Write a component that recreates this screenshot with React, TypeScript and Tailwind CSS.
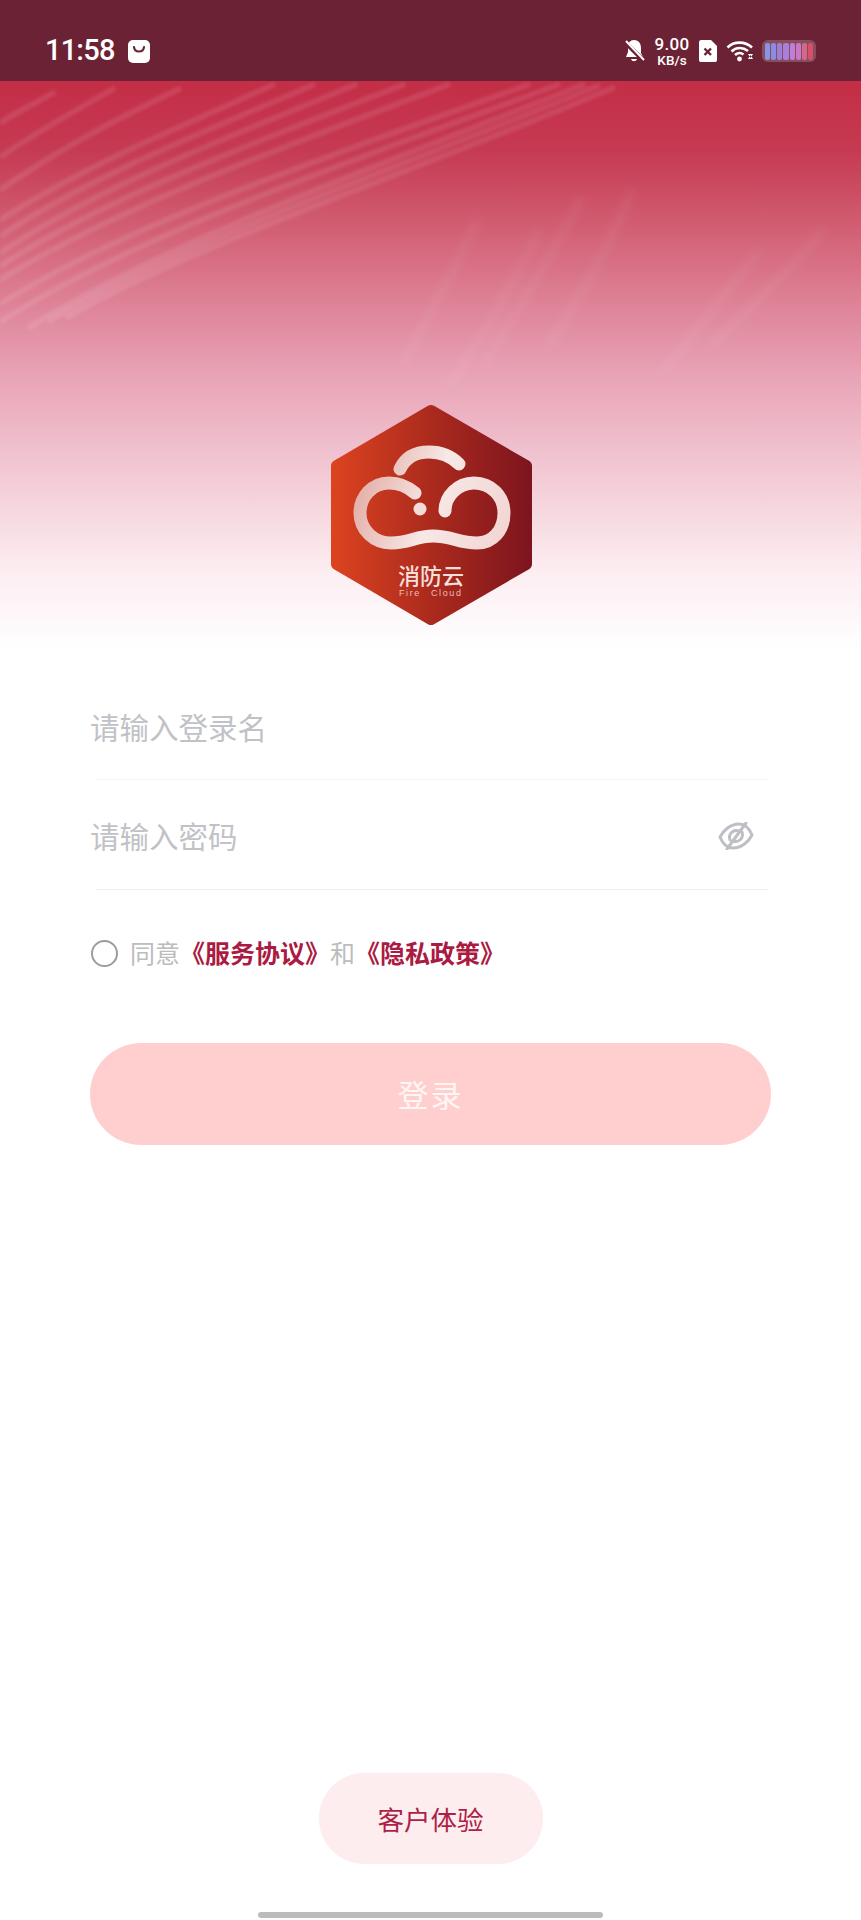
const cjk = "font-['Noto_Sans_CJK_SC','Noto_Sans',sans-serif]";

function Waves() {
  const main = [
    'M66 318 C190 245 420 170 615 87',
    'M48 322 C180 242 400 168 600 85',
    'M28 328 C170 240 380 165 585 84',
    'M0 322 C140 232 350 162 560 84',
    'M0 304 C130 222 330 156 530 84',
    'M0 280 C120 205 290 145 450 84',
    'M0 266 C110 195 262 140 405 84',
    'M0 253 C100 185 235 135 357 84',
    'M0 236 C92 175 210 130 315 84',
    'M0 220 C85 165 185 125 275 84',
    'M0 190 C65 145 125 115 181 88',
    'M0 157 C40 130 80 108 115 88',
    'M0 123 C20 110 38 102 55 92',
  ];
  const faint = [
    'M632 190 C610 250 575 300 549 347',
    'M582 197 C550 260 510 320 483 367',
    'M478 220 C450 280 420 330 401 367',
    'M540 230 C510 290 480 340 450 385',
    'M824 230 C780 280 740 320 708 347',
    'M760 250 C720 300 690 340 660 375',
  ];
  return (
    <>
      <svg className="absolute inset-0 blur-[1.5px]" width="861" height="650" viewBox="0 0 861 650" fill="none">
        {main.map((d, i) => (
          <path key={i} d={d} stroke="#fff" strokeOpacity="0.1" strokeWidth="6" />
        ))}
      </svg>
      <svg className="absolute inset-0 blur-[4px]" width="861" height="650" viewBox="0 0 861 650" fill="none">
        {faint.map((d, i) => (
          <path key={i} d={d} stroke="#fff" strokeOpacity="0.06" strokeWidth="9" />
        ))}
      </svg>
    </>
  );
}

function StatusIcons() {
  return (
    <div className="flex items-center">
      {/* muted bell */}
      <svg width="21" height="24" viewBox="0 0 21 24" fill="none">
        <path d="M10 1 C15 1 17 5 17 9 L17 14 L19 18 L2 18 L4 13 L4 8 C4 4 6 1 10 1Z M7 20 C8 23 12 23 13 20Z" fill="#fff" />
        <path d="M1 3 L20 22" stroke="#6b2234" strokeWidth="4.5" />
        <path d="M2 2 L20 21" stroke="#fff" strokeWidth="2" />
      </svg>
      <div className="ml-[9px] w-[36px] flex flex-col items-center text-white font-['Roboto',sans-serif] font-medium">
        <span className="text-[17px] leading-[17px] tracking-[0.3px]">9.00</span>
        <span className="text-[13.5px] leading-[13px] mt-[1px]">KB/s</span>
      </div>
      {/* sim */}
      <svg className="ml-[8px]" width="20" height="24" viewBox="0 0 20 24" fill="none">
        <path d="M3 1 L13 1 L19 7 L19 21 C19 22.5 18 23 17 23 L3 23 C2 23 1 22.5 1 21 L1 3 C1 2 2 1 3 1Z" fill="#fff" />
        <path d="M6.5 9.5 L13 16 M13 9.5 L6.5 16" stroke="#6b2234" strokeWidth="2.4" />
      </svg>
      {/* wifi */}
      <svg className="ml-[8px]" width="28" height="22" viewBox="0 0 28 22" fill="none">
        <path d="M1.5 7.5 C8 1 19 1 26 7.5" stroke="#fff" strokeWidth="2.6" />
        <path d="M5.5 11.5 C10 7 17 7 22 11" stroke="#fff" strokeWidth="2.6" />
        <path d="M9 15 C11.5 12.5 15 12.5 17.5 14.5" stroke="#fff" strokeWidth="2.6" />
        <circle cx="13.5" cy="19" r="2.4" fill="#fff" />
        <path d="M22 14 L27 14 L24.5 18Z M22 19 L27 19 L24.5 15" fill="#fff" />
      </svg>
      {/* battery */}
      <div className="ml-[8px] w-[54px] h-[22px] rounded-[6px] bg-white/20 flex items-center gap-[1px] px-[3px] blur-[0.5px]">
        {['#8a94e6', '#8a8ce4', '#9a80dc', '#a97fdc', '#bd7fd8', '#c878c4', '#d2688f', '#d94f6a'].map((c) => (
          <span key={c} className="flex-1 h-[17px] rounded-[2px]" style={{ background: c }} />
        ))}
      </div>
    </div>
  );
}

function Logo() {
  return (
    <svg width="260" height="260" viewBox="0 0 260 260" fill="none">
      <defs>
        <linearGradient id="hex" gradientUnits="userSpaceOnUse" x1="30" y1="0" x2="231" y2="0">
          <stop offset="0" stopColor="#dc4420" />
          <stop offset="0.5" stopColor="#ab2a1d" />
          <stop offset="1" stopColor="#7d141e" />
        </linearGradient>
        <linearGradient id="cloud" gradientUnits="userSpaceOnUse" x1="55" y1="100" x2="205" y2="150">
          <stop offset="0" stopColor="#e3aca6" />
          <stop offset="0.5" stopColor="#f7e8e6" />
          <stop offset="1" stopColor="#f2d6d4" />
        </linearGradient>
      </defs>
      <path
        d="M130 31 L225 86 L225 184 L130 239 L36 184 L36 86Z"
        fill="url(#hex)"
        stroke="url(#hex)"
        strokeWidth="12"
        strokeLinejoin="round"
      />
      <g stroke="url(#cloud)" strokeWidth="13" strokeLinecap="round">
        <path d="M114 113 C107 107 98 103 88 103 C71 103 59 117 59 133 C59 150 73 163 90 163 C108 163 115 156 132 156 C150 156 158 163 176 163 C192 163 203 150 203 133 C203 116 190 103 173 103 C157 103 144 116 144 131" />
        <path d="M99 89 C105 76 116 72 128 72 C140 72 150 76 158 84" />
      </g>
      <circle cx="119" cy="129" r="6.5" fill="#f3dcd8" />
      <text x="130" y="204" textAnchor="middle" fontSize="22" fontWeight="500" fill="#f6dfd9" fontFamily="'Noto Sans CJK SC', sans-serif">
        消防云
      </text>
      <text x="98" y="216" fontSize="9" letterSpacing="1.6" fill="#eebfb5" fontFamily="'Liberation Sans', sans-serif">
        Fire
      </text>
      <text x="130" y="216" fontSize="9" letterSpacing="1.6" fill="#eebfb5" fontFamily="'Liberation Sans', sans-serif">
        Cloud
      </text>
    </svg>
  );
}

function EyeOffIcon() {
  return (
    <svg width="36" height="28" viewBox="0 0 36 28" fill="none" stroke="#bdbfc5" strokeWidth="3" strokeLinecap="round">
      <path d="M2 15 C5 9 12 2 21 2 C28 2 32 8 34 13 C31 19 24 26 15 26 C8 26 4 20 2 15Z" />
      <path d="M9 27 L28 1" />
      <path d="M12 18 C10 12 15 7 21 9" />
      <path d="M24 10 C26 16 21 21 15 19" />
    </svg>
  );
}

export default function App() {
  return (
    <div className={`w-[861px] h-[1920px] bg-white flex flex-col ${cjk}`}>
      <div className="relative h-[650px] bg-[linear-gradient(180deg,#c42e47_0px,#c42e47_85px,#c53a52_150px,#cf566b_210px,#dc7c91_290px,#e9a5b8_380px,#f3ccd7_480px,#fcedf1_570px,#ffffff_650px)]">
        <Waves />
        <div className="relative h-[81px] bg-[#6b2234] pt-[21px] px-[45px] flex items-center justify-between">
          <div className="flex items-center">
            <span className="text-white text-[29px] tracking-[-0.8px] font-medium font-['Roboto',sans-serif]">11:58</span>
            <svg className="ml-[13px]" width="22" height="23" viewBox="0 0 22 23" fill="none">
              <rect x="0" y="0" width="22" height="23" rx="5" fill="#fff" />
              <path d="M6 7 C6.5 13 15.5 13 16 7" stroke="#6b2234" strokeWidth="2.2" strokeLinecap="round" />
            </svg>
          </div>
          <StatusIcons />
        </div>
        <div className="relative mt-[299px] flex justify-center">
          <Logo />
        </div>
      </div>

      <div className="px-[90px] pt-[24px]">
        <input
          placeholder="请输入登录名"
          className="block w-full h-[103px] mb-[2px] outline-none text-[29.5px] placeholder:text-[#c1c2c7]"
        />
        <div className="h-px ml-[6px] mr-[3px] bg-[#f3f3f3]" />
        <div className="flex items-center h-[106px] mt-[2px] mb-[1px]">
          <input
            placeholder="请输入密码"
            className="flex-1 h-full outline-none text-[29.5px] placeholder:text-[#c1c2c7]"
          />
          <div className="mr-[17px] mt-[1px]">
            <EyeOffIcon />
          </div>
        </div>
        <div className="h-px ml-[6px] mr-[3px] bg-[#f1f1f1]" />

        <div className="flex items-center h-[40px] mt-[43px]">
          <span className="ml-[1px] w-[27px] h-[27px] rounded-full border-2 border-[#9c9c9c]" />
          <div className="ml-[12px] pb-[2px] text-[25px] leading-[38px] text-[#bcbcbc]">
            同意<span className="font-bold text-[#ab1a42]">《服务协议》</span>和<span className="font-bold text-[#ab1a42]">《隐私政策》</span>
          </div>
        </div>

        <button className="mt-[70px] w-full h-[102px] rounded-full bg-[#ffcfd0] text-[#fff6f4] text-[31px] tracking-[2px]">
          登录
        </button>
      </div>

      <div className="mt-auto flex flex-col items-center">
        <button className="w-[224px] h-[91px] rounded-[45px] bg-[#fdedef] text-[#ad1f48] text-[26.5px]">
          客户体验
        </button>
        <div className="mt-[48px] mb-[2px] w-[345px] h-[6px] rounded-full bg-[#bbbbbb]" />
      </div>
    </div>
  );
}
